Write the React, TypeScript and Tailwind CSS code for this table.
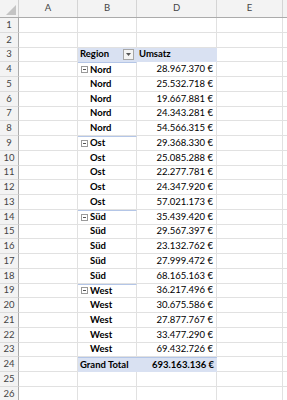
const font = { fontFamily: "Lato, 'Liberation Sans', sans-serif" };

type Row = { b?: string; d?: string; kind?: "head" | "group" | "item" | "total" };

const regions: [string, string[]][] = [
  ["Nord", ["28.967.370 €", "25.532.718 €", "19.667.881 €", "24.343.281 €", "54.566.315 €"]],
  ["Ost", ["29.368.330 €", "25.085.288 €", "22.277.781 €", "24.347.920 €", "57.021.173 €"]],
  ["Süd", ["35.439.420 €", "29.567.397 €", "23.132.762 €", "27.999.472 €", "68.165.163 €"]],
  ["West", ["36.217.496 €", "30.675.586 €", "27.877.767 €", "33.477.290 €", "69.432.726 €"]],
];

const rows: Row[] = [{}, {}, { b: "Region", d: "Umsatz", kind: "head" }];
regions.forEach(([name, vals]) => {
  vals.forEach((v, i) => rows.push({ b: name, d: v, kind: i === 0 ? "group" : "item" }));
});
rows.push({ b: "Grand Total", d: "693.163.136 €", kind: "total" });
rows.push({}, {});

const MinusBox = () => (
  <span className="inline-flex h-[7px] w-[7px] items-center justify-center border border-[#9a9a9a] bg-white mr-[2px]">
    <span className="block h-px w-[3px] bg-[#555]" />
  </span>
);

const FilterBtn = () => (
  <span className="ml-auto mr-[3px] flex h-[11px] w-[11px] items-center justify-center border border-[#a6a6a6] bg-[#f4f4f4]">
    <svg width="5" height="3" viewBox="0 0 5 3">
      <path d="M0 0h5L2.5 3z" fill="#555" />
    </svg>
  </span>
);

export default function App() {
  return (
    <div className="w-[287px] h-[400px] overflow-hidden bg-white text-[9.5px] text-black" style={font}>
      {/* column headers */}
      <div className="flex h-[18px] border-b border-[#ababab] bg-[#f3f3f3] text-[#444]">
        <div className="relative w-[19px] shrink-0 border-r border-[#cfcfcf]">
          <svg className="absolute right-[2px] bottom-[2px]" width="10" height="10" viewBox="0 0 10 10">
            <path d="M10 0v10H0z" fill="#c4c4c4" />
          </svg>
        </div>
        {[["A", 59], ["B", 59], ["D", 80], ["E", 66]].map(([l, w]) => (
          <div key={l} className="flex shrink-0 items-center justify-center border-r border-[#d4d4d4]" style={{ width: w as number }}>
            {l}
          </div>
        ))}
        <div className="flex-1" />
      </div>

      {rows.map((r, i) => {
        const blue = r.kind === "head" || r.kind === "total";
        return (
          <div key={i} className="flex h-[14.75px]">
            <div className="flex w-[19px] shrink-0 items-center justify-center border-r border-b border-r-[#ababab] border-b-[#dcdcdc] bg-[#f3f3f3] text-[#444]">
              {i + 1}
            </div>
            <div className="w-[59px] shrink-0 border-r border-b border-[#e1e1e1]" />
            <div
              className={`flex w-[59px] shrink-0 items-center border-b font-bold ${
                blue ? "bg-[#d9e1f2] border-b-[#d9e1f2]" : "border-b-[#e1e1e1] border-r border-r-[#e1e1e1]"
              } ${r.kind === "group" || r.kind === "total" ? "border-t border-t-[#b4c6e7]" : ""} ${
                r.kind === "head" ? "pl-[2px]" : r.kind === "total" ? "pl-[2px]" : r.kind === "group" ? "pl-[3px]" : "pl-[12px]"
              }`}
            >
              {r.kind === "group" && <MinusBox />}
              {r.b}
              {r.kind === "head" && <FilterBtn />}
            </div>
            <div
              className={`flex w-[80px] shrink-0 items-center border-b ${
                blue ? "bg-[#d9e1f2] border-b-[#d9e1f2] font-bold" : "border-b-[#e1e1e1] border-r border-r-[#e1e1e1]"
              } ${r.kind === "total" ? "border-t border-t-[#b4c6e7]" : ""} ${
                r.kind === "head" ? "justify-start pl-[2px]" : "justify-end pr-[3px]"
              }`}
            >
              {r.d}
            </div>
            <div className="w-[66px] shrink-0 border-r border-b border-[#e1e1e1]" />
            <div className="flex-1 border-b border-[#e1e1e1]" />
          </div>
        );
      })}
    </div>
  );
}
